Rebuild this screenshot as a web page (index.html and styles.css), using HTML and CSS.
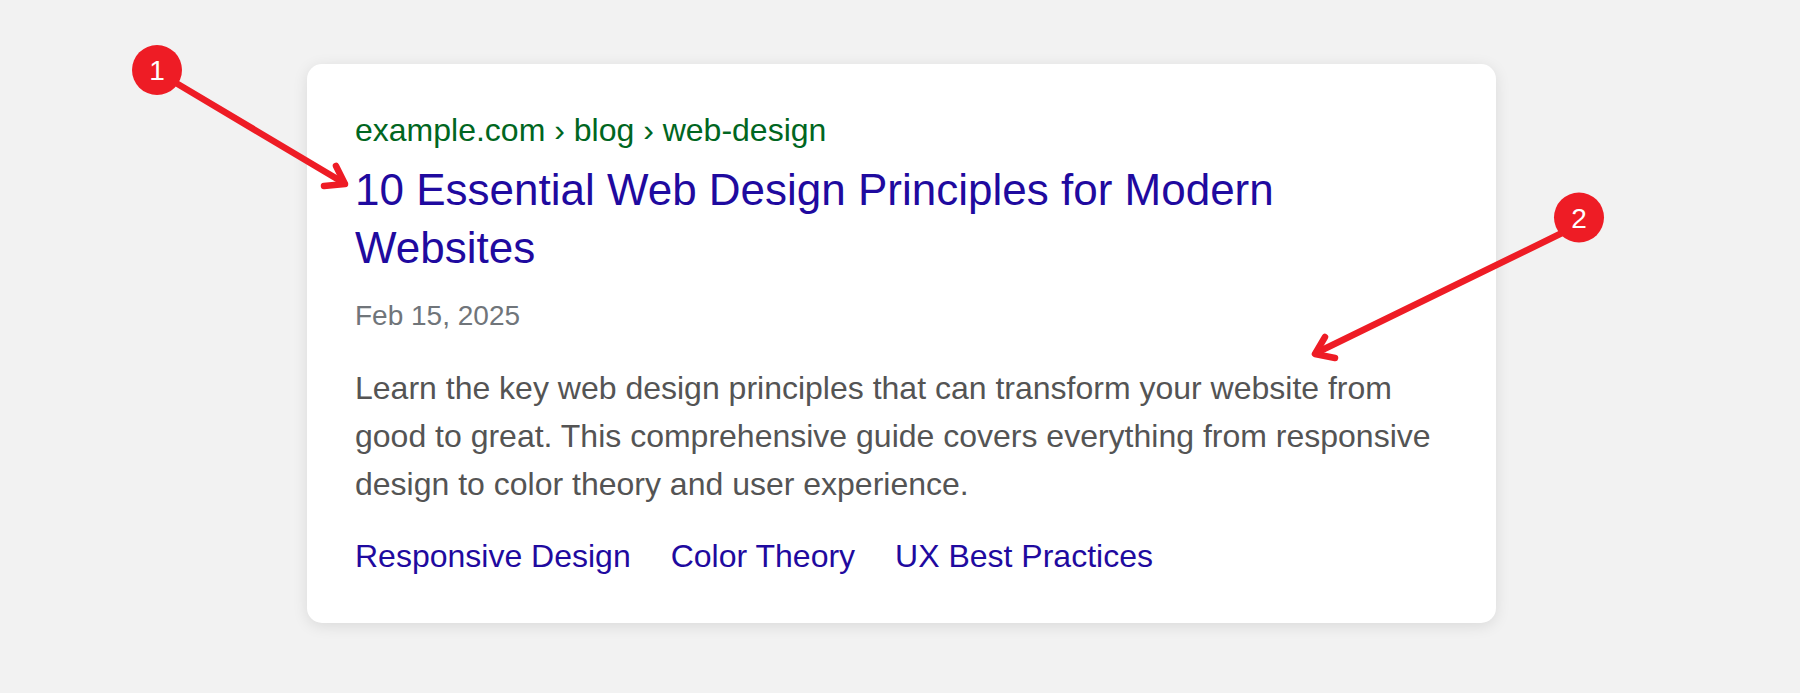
FILE: index.html
```html
<!DOCTYPE html>
<html lang="en">
<head>
<meta charset="utf-8">
<title>Search result</title>
<link rel="stylesheet" href="styles.css">
</head>
<body>
<main class="card">
  <div class="crumb">example.com › blog › web-design</div>
  <h1 class="title">10 Essential Web Design Principles for Modern Websites</h1>
  <div class="date">Feb 15, 2025</div>
  <p class="desc">Learn the key web design principles that can transform your website from good to great. This comprehensive guide covers everything from responsive design to color theory and user experience.</p>
  <nav class="links">
    <a class="link">Responsive Design</a>
    <a class="link">Color Theory</a>
    <a class="link">UX Best Practices</a>
  </nav>
</main>
<svg class="overlay" width="1800" height="693" viewBox="0 0 1800 693">
  <g class="arrow">
    <path d="M176 83 L344 183"/>
    <path d="M324 186 L345 184 L336 166"/>
    <path d="M1562 233 L1316 353"/>
    <path d="M1325 337 L1315 354 L1335 358"/>
  </g>
  <circle class="dot" cx="157" cy="70" r="25"/>
  <circle class="dot" cx="1579" cy="217.5" r="25"/>
  <text class="num" x="157" y="80">1</text>
  <text class="num" x="1579" y="228">2</text>
</svg>
</body>
</html>
```
FILE: styles.css
```css
html, body { margin: 0; height: 693px; overflow: hidden; }
body {
  background: #f2f2f2;
  font-family: "Liberation Sans", Arial, sans-serif;
  padding-top: 64px;
  box-sizing: border-box;
  position: relative;
}
.card {
  box-sizing: border-box;
  width: 1189px;
  height: 559px;
  margin-left: 307px;
  padding: 48px;
  background: #fff;
  border-radius: 15px;
  box-shadow: 0 3px 15px rgba(0,0,0,.1);
}
.crumb { color: #006621; font-size: 32px; line-height: 36px; margin-bottom: 13px; }
.title { color: #1f0a9f; font-size: 44px; font-weight: 400; line-height: 58px; margin: 0 0 21px; }
.date { color: #70757a; font-size: 28px; line-height: 36px; margin-bottom: 30px; }
.desc { color: #545454; font-size: 32px; line-height: 48px; margin: 0 0 24px; }
.links { display: flex; gap: 40px; }
.link { color: #1f0a9f; font-size: 32px; line-height: 48px; }
.overlay { position: absolute; left: 0; top: 0; }
.arrow path { fill: none; stroke: #ee1c25; stroke-width: 6.5; stroke-linecap: round; stroke-linejoin: round; }
.dot { fill: #ee1c25; }
.num { fill: #fff; font-size: 28px; text-anchor: middle; font-family: "Liberation Sans", Arial, sans-serif; }
```
